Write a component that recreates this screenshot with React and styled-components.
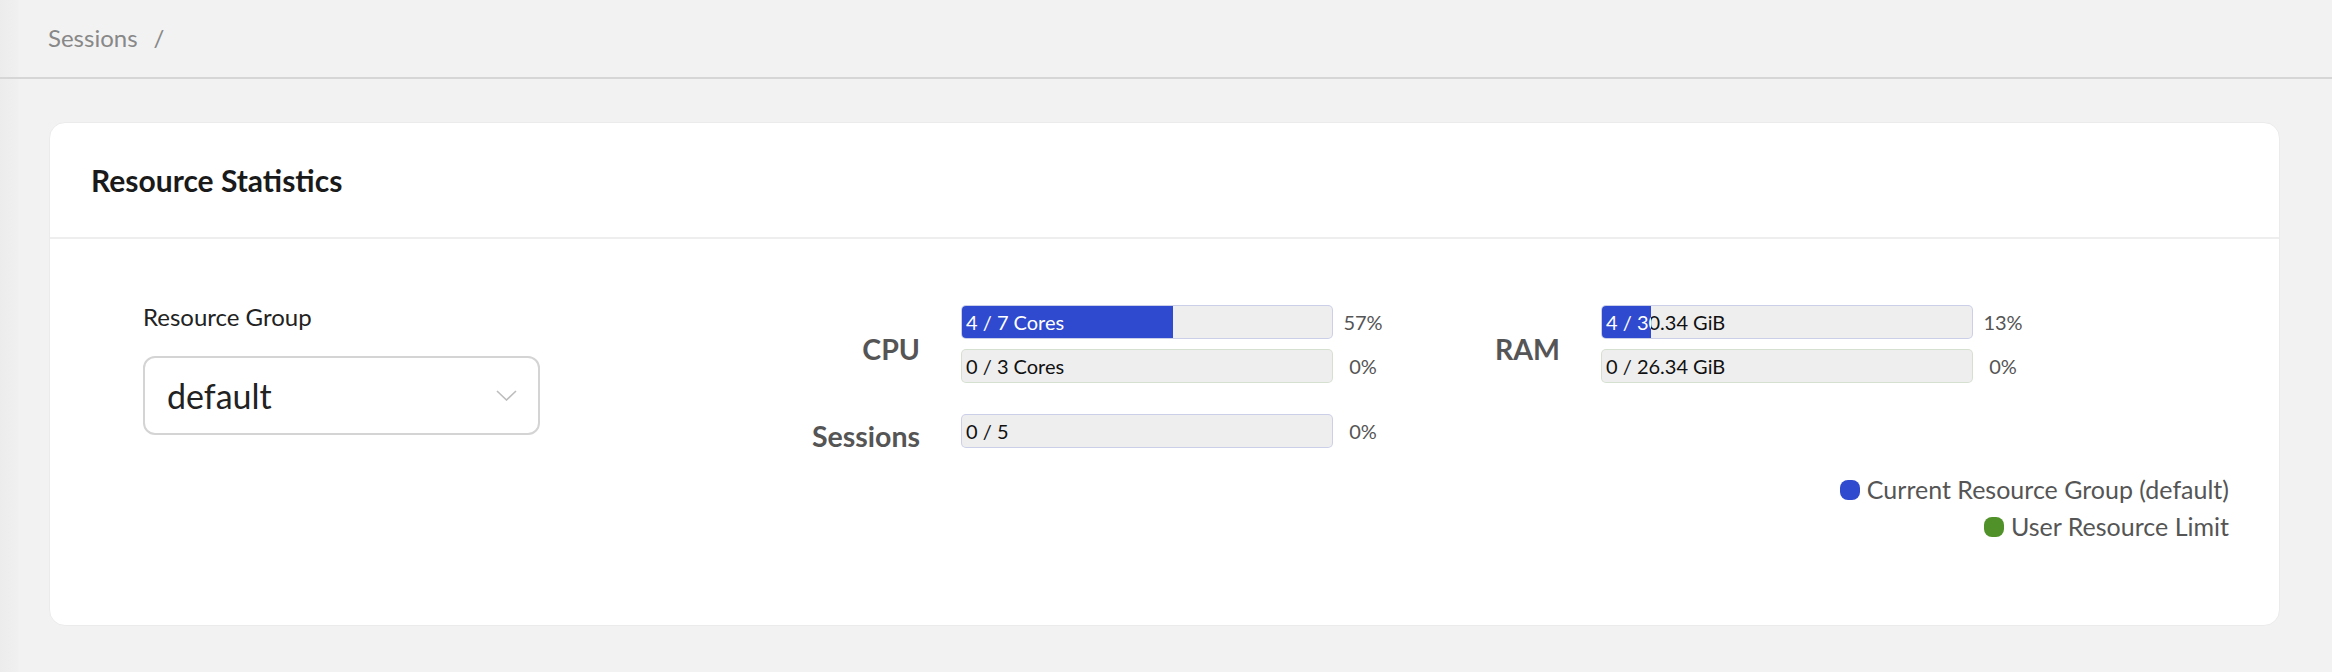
import React from "react";
import styled, { createGlobalStyle } from "styled-components";

const GlobalStyle = createGlobalStyle`
  html, body { margin: 0; padding: 0; }
  body {
    background: #f2f2f2;
    font-family: Lato, "Noto Sans", "Liberation Sans", sans-serif;
  }
  * { box-sizing: border-box; }
`;

const BLUE = "#2f49cf";
const GREEN = "#509229";

const Page = styled.div`
  min-height: 672px;
  background: linear-gradient(to right, #ececec 0, #f0f0f0 18px, #f2f2f2 19px, #f2f2f2 100%);
  display: flex;
  flex-direction: column;
`;

const Header = styled.header`
  height: 79px;
  border-bottom: 2px solid #d6d6d6;
  display: flex;
  align-items: center;
  padding-left: 48px;
  padding-bottom: 2px;
`;

const Crumb = styled.span`
  font-size: 24px;
  color: #888;
`;

const Sep = styled.span`
  font-size: 24px;
  color: #888;
  margin-left: 16px;
`;

const Content = styled.div`
  padding: 43px 52px 0 49px;
`;

const Card = styled.section`
  background: #fff;
  border: 1px solid #ebebeb;
  border-radius: 16px;
  height: 504px;
  display: flex;
  flex-direction: column;
`;

const CardHeader = styled.div`
  height: 116px;
  border-bottom: 2px solid #eeeeee;
  display: flex;
  align-items: center;
  padding-left: 41px;
`;

const Title = styled.h2`
  margin: 0;
  font-size: 30px;
  font-weight: 700;
  color: #1a1a1a;
`;

const CardBody = styled.div`
  display: flex;
  align-items: flex-start;
  padding-left: 93px;
`;

const LeftCol = styled.div`
  width: 397px;
  padding-top: 63px;
  display: flex;
  flex-direction: column;
  gap: 25px;
`;

const FieldLabel = styled.div`
  font-size: 24px;
  line-height: 29px;
  color: #222;
`;

const Select = styled.div`
  height: 79px;
  border: 2px solid #d4d4d4;
  border-radius: 12px;
  padding: 0 21px 0 22px;
  display: flex;
  align-items: center;
  justify-content: space-between;
  font-size: 34px;
  color: #222;
`;

const Stats = styled.div`
  margin-left: 266px;
  padding-top: 66px;
  width: 1423px;
  display: flex;
  flex-direction: column;
`;

const StatsRow = styled.div`
  display: flex;
  gap: 63px;
`;

const GroupCol = styled.div`
  width: 577px;
  display: flex;
  flex-direction: column;
  gap: 26px;
`;

const Group = styled.div`
  display: flex;
  align-items: center;
`;

const GroupLabel = styled.div`
  width: 114px;
  margin-right: 41px;
  text-align: right;
  font-size: 28.5px;
  font-weight: 700;
  color: #555;
  padding-top: 10px;
  white-space: nowrap;
`;

const Bars = styled.div`
  display: flex;
  flex-direction: column;
  gap: 10px;
`;

const BarRow = styled.div`
  display: flex;
  align-items: center;
`;

const Track = styled.div`
  position: relative;
  width: 372px;
  height: 34px;
  background: #eeeeee;
  border: 1px solid ${(p) => p.$edge};
  border-radius: 5px;
  overflow: hidden;
`;

const BarText = styled.div`
  position: absolute;
  left: 4px;
  top: 0;
  line-height: 32px;
  font-size: 20px;
  color: #111;
  white-space: nowrap;
`;

const Fill = styled.div`
  position: absolute;
  left: -1px;
  top: -1px;
  bottom: -1px;
  background: ${(p) => p.$color};
  overflow: hidden;
  border-radius: 5px 0 0 5px;
`;

const FillText = styled(BarText)`
  left: 5px;
  top: 1px;
  color: #fff;
`;

const Pct = styled.div`
  width: 40px;
  margin-left: 10px;
  text-align: center;
  font-size: 20px;
  color: #555;
`;

const Legend = styled.div`
  margin-top: 22px;
  display: flex;
  flex-direction: column;
  align-items: flex-end;
  gap: 8px;
`;

const LegendItem = styled.div`
  display: flex;
  align-items: center;
  gap: 7px;
  font-size: 25px;
  line-height: 29px;
  color: #555;
`;

const Dot = styled.span`
  width: 20px;
  height: 20px;
  border-radius: 8px;
  background: ${(p) => p.$color};
`;

const Chevron = () => (
  <svg width="21" height="11" viewBox="0 0 21 11" fill="none">
    <polyline points="1,1 10.5,10 20,1" stroke="#bdbdbd" strokeWidth="1.6" />
  </svg>
);

function Bar({ text, percent, color, edge }) {
  return (
    <BarRow>
      <Track $edge={edge}>
        <BarText>{text}</BarText>
        {percent > 0 && (
          <Fill $color={color} style={{ width: `calc(${percent}% + 1px)` }}>
            <FillText>{text}</FillText>
          </Fill>
        )}
      </Track>
      <Pct>{Math.round(percent)}%</Pct>
    </BarRow>
  );
}

const blueEdge = "rgba(47,73,207,0.18)";
const greenEdge = "rgba(80,146,41,0.15)";

export default function App() {
  return (
    <>
      <GlobalStyle />
      <Page>
        <Header>
          <Crumb>Sessions</Crumb>
          <Sep>/</Sep>
        </Header>
        <Content>
          <Card>
            <CardHeader>
              <Title>Resource Statistics</Title>
            </CardHeader>
            <CardBody>
              <LeftCol>
                <FieldLabel>Resource Group</FieldLabel>
                <Select>
                  <span>default</span>
                  <Chevron />
                </Select>
              </LeftCol>
              <Stats>
                <StatsRow>
                  <GroupCol>
                    <Group>
                      <GroupLabel>CPU</GroupLabel>
                      <Bars>
                        <Bar text="4 / 7 Cores" percent={57.14} color={BLUE} edge={blueEdge} />
                        <Bar text="0 / 3 Cores" percent={0} color={GREEN} edge={greenEdge} />
                      </Bars>
                    </Group>
                    <Group>
                      <GroupLabel>Sessions</GroupLabel>
                      <Bars>
                        <Bar text="0 / 5" percent={0} color={BLUE} edge={blueEdge} />
                      </Bars>
                    </Group>
                  </GroupCol>
                  <GroupCol>
                    <Group>
                      <GroupLabel>RAM</GroupLabel>
                      <Bars>
                        <Bar text="4 / 30.34 GiB" percent={13.18} color={BLUE} edge={blueEdge} />
                        <Bar text="0 / 26.34 GiB" percent={0} color={GREEN} edge={greenEdge} />
                      </Bars>
                    </Group>
                  </GroupCol>
                </StatsRow>
                <Legend>
                  <LegendItem>
                    <Dot $color={BLUE} />
                    Current Resource Group (default)
                  </LegendItem>
                  <LegendItem>
                    <Dot $color={GREEN} />
                    User Resource Limit
                  </LegendItem>
                </Legend>
              </Stats>
            </CardBody>
          </Card>
        </Content>
      </Page>
    </>
  );
}
